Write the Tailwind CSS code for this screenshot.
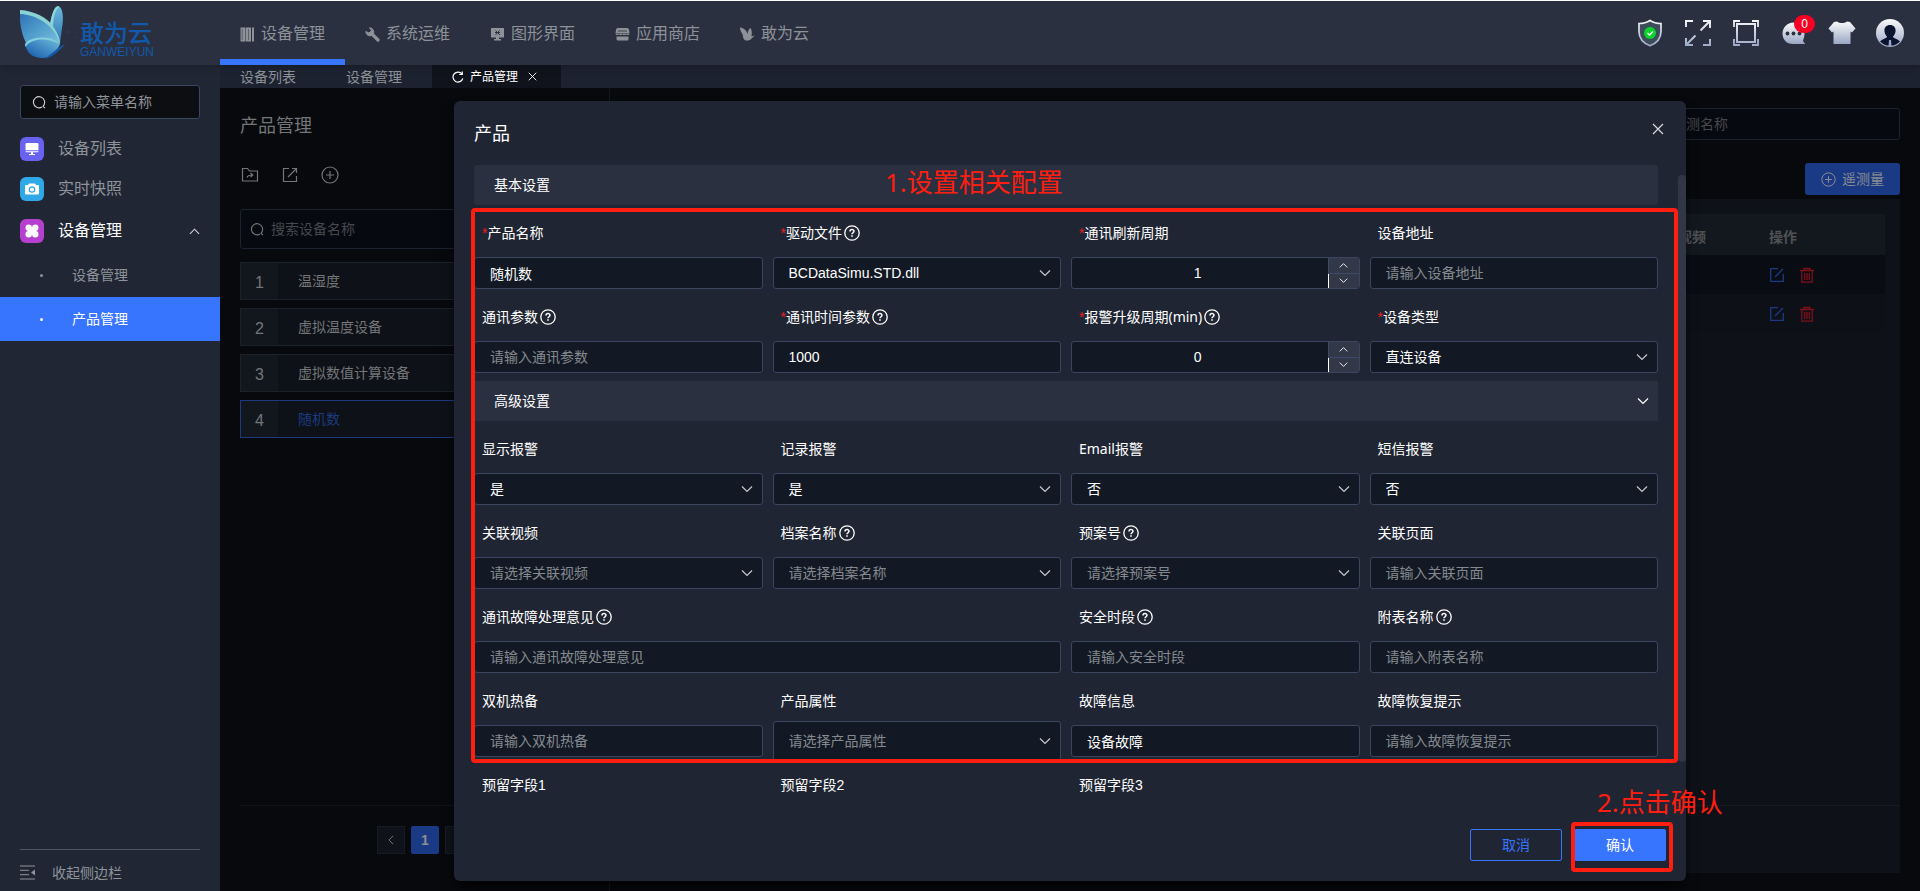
<!DOCTYPE html>
<html lang="zh-CN">
<head>
    <meta charset="UTF-8">
    <meta name="viewport" content="width=device-width, initial-scale=1.0">
    <title>产品管理 - 敢为云</title>
    <script src="https://cdn.jsdelivr.net/npm/@tailwindcss/browser@4"></script>
</head>
<body class="flex h-screen flex-col overflow-hidden border-t border-white bg-[#08090d] font-['Liberation_Sans','Noto_Sans_CJK_SC',sans-serif] text-sm text-white">

    <!-- Shared icons -->
    <svg class="absolute h-0 w-0" aria-hidden="true">
        <symbol id="down" viewBox="0 0 12 12"><path d="M1 3.5l5 5 5-5" fill="none" stroke="currentColor" stroke-width="1.2"/></symbol>
        <symbol id="up" viewBox="0 0 12 12"><path d="M1 8.5l5-5 5 5" fill="none" stroke="currentColor" stroke-width="1.2"/></symbol>
        <symbol id="close" viewBox="0 0 12 12"><path d="M1 1l10 10M11 1L1 11" fill="none" stroke="currentColor" stroke-width="1.2"/></symbol>
        <symbol id="search" viewBox="0 0 14 14"><path d="M11 11.2a5.6 5.6 0 1 0-1 .8M10.600 10.800L13 13.200" fill="none" stroke="currentColor" stroke-width="1.1"/></symbol>
        <symbol id="help" viewBox="0 0 16 16"><circle cx="8" cy="8" r="7.200" fill="none" stroke="currentColor" stroke-width="1.300"/><path d="M6 6.500c0-2.600 4-2.500 4-.200 0 1.400-2 1.500-2 3" fill="none" stroke="currentColor" stroke-width="1.500"/><path d="M7.200 10.300h1.600v1.500H7.200z" fill="currentColor"/></symbol>
        <symbol id="plus" viewBox="0 0 18 18"><circle cx="9" cy="9" r="8" fill="none" stroke="currentColor" stroke-width="1.200"/><path d="M9 5v8M5 9h8" fill="none" stroke="currentColor" stroke-width="1.200"/></symbol>
        <symbol id="edit" viewBox="0 0 16 16"><path d="M9 1.700H1.700v12.600h12.600V7M6 10l8-8" fill="none" stroke="currentColor" stroke-width="1.300"/></symbol>
        <symbol id="trash" viewBox="0 0 16 16"><path d="M1 3.500h14M5 3.500v-2h6v2M2.800 3.500v11.700h10.400V3.500" fill="none" stroke="currentColor" stroke-width="1.300"/><path d="M5.700 6v7M8 6v7M10.300 6v7" stroke="currentColor" stroke-width="1.300"/></symbol>
        <linearGradient id="silver" x1="0" y1="0" x2="0" y2="1"><stop offset="0" stop-color="#fafafa"/><stop offset="1" stop-color="#9aa6c6"/></linearGradient>
        <linearGradient id="silverFull" gradientUnits="userSpaceOnUse" x1="0" y1="0" x2="0" y2="28"><stop offset="0" stop-color="#fafafa"/><stop offset="1" stop-color="#9aa6c6"/></linearGradient>
    </svg>

    <!-- Top bar -->
    <header class="z-10 flex h-16 shrink-0 bg-[#2a3040] shadow-md">
        <a href="#" class="flex w-[220px] shrink-0 pl-5">
            <svg class="mt-[5px] h-[55px] w-[60px] shrink-0" viewBox="0 0 60 55">
                <defs>
                    <linearGradient id="wingA" x1="0" y1="0" x2="1" y2="1"><stop offset="0" stop-color="#2b6cb5"/><stop offset=".5" stop-color="#4f9ccb"/><stop offset="1" stop-color="#7cc0dd"/></linearGradient>
                    <linearGradient id="wingB" x1="0" y1="0" x2="0" y2="1"><stop offset="0" stop-color="#6cb9da"/><stop offset="1" stop-color="#2f78b8"/></linearGradient>
                    <linearGradient id="wingC" x1="0" y1="1" x2="1" y2="0"><stop offset="0" stop-color="#1355a8"/><stop offset="1" stop-color="#70c0e0"/></linearGradient>
                </defs>
                <path d="M30 18C32 8 34 1 38 0c5 1 6 12 4 22l-2 15z" fill="url(#wingB)"/>
                <path d="M30 18C32 8 34 1 38 0l1 1c-4 3-6 12-6 21z" fill="#8fd6d8"/>
                <path d="M0 4c13 1 28 7 34 18 4 6 6 11 6 16-8-6-22-5-34-1C1 27-1 14 0 4z" fill="url(#wingA)"/>
                <path d="M0 4c13 1 28 7 34 18 4 6 6 11 6 16C36 22 20 9 0 8z" fill="#8bd3d2"/>
                <path d="M5 37c8-7 28-7 35 1-3 8-11 14-18 14-9 0-16-5-17-15z" fill="url(#wingC)"/>
                <path d="M5 41c-2-10 25-14 35-3-12-6-27-7-35 3z" fill="#84d0dc"/>
                <path d="M25 53c5-1 14-7 20-15-4 2-14 9-20 15z" fill="#1459ad"/>
                <circle cx="49" cy="26" r=".7" fill="#1459ad"/><circle cx="47" cy="36" r=".5" fill="#1459ad"/><circle cx="57" cy="31" r=".6" fill="#1459ad"/>
            </svg>
            <span class="flex flex-col pt-5 text-[#1258ab]">
                <span class="text-2xl leading-[26px] font-medium">敢为云</span>
                <span class="text-xs leading-[10px]">GANWEIYUN</span>
            </span>
        </a>
        <nav class="flex text-base text-[#8d9198]">
            <a href="#" class="flex items-center gap-1.5 border-b-[6px] border-[#3875ff] px-5 pb-0.5 pt-2.5">
                <svg class="h-[15px] w-[15px]" viewBox="0 0 15 15" fill="currentColor"><path d="M.5 .5h5v14h-5zM6 .5h5v14H6zM12 .5h2v14h-2z"/><path d="M2.200 2v11M8.500 2v11" stroke="#2a3040" stroke-width=".5"/></svg>设备管理</a>
            <a href="#" class="flex items-center gap-1.5 px-5 pt-0.5">
                <svg class="h-[15px] w-[15px]" viewBox="0 0 15 15" fill="none" stroke="currentColor"><path d="M4.500 .8L6.500 3.500 4 6 .8 4.500A4.200 4.200 0 0 0 7 8.300L8.500 6.700A4.300 4.300 0 0 0 4.500 .8z" fill="currentColor"/><path d="M6.500 6.500l6.500 6.500" stroke-width="3.200" stroke-linecap="round"/></svg>系统运维</a>
            <a href="#" class="flex items-center gap-1.5 px-5 pt-0.5">
                <svg class="h-[15px] w-[15px]" viewBox="0 0 15 15" fill="currentColor"><path d="M1 1h13v9.500H1zM6 10h3v2.500H6zM4 12h7v1.500H4z"/><path d="M5.500 3.500l4.500 4.500M9.500 3.500l-4 4.500M5 5.500h5" stroke="#2a3040" stroke-width="1"/></svg>图形界面</a>
            <a href="#" class="flex items-center gap-1.5 px-5 pt-0.5">
                <svg class="h-[15px] w-[15px]" viewBox="0 0 15 15" fill="currentColor"><path d="M3 1h9a2 2 0 0 1 2 2l.500 3H.5L1 3a2 2 0 0 1 2-2z"/><path d="M.5 6.500h14c0 2-3 2-3.500.6-.5 1.600-3 1.600-3.500 0-.5 1.600-3 1.600-3.500 0C3.500 8.500.5 8.500.5 6.500zM1.500 9.500h12V12a1.500 1.500 0 0 1-1.500 1.500H3A1.500 1.500 0 0 1 1.500 12z"/><path d="M3 4h9" stroke="#2a3040" stroke-width=".8"/></svg>应用商店</a>
            <a href="#" class="flex items-center gap-1.5 px-5 pt-0.5">
                <svg class="h-[15px] w-[15px]" viewBox="0 0 15 15" fill="currentColor"><path d="M0 .5c4 .5 7 3.500 7.500 6.500C8 4 9 1.500 10.500 1c1.500 2 1.500 5 1 8.500l3.500-1-3.500 3c-2 3-8 3-8.500-1.500C3.500 8 1.500 6 .8 4 .2 3 0 2 0 .5z"/></svg>敢为云</a>
        </nav>
        <div class="ml-auto flex items-center gap-5 pr-4">
            <button aria-label="安全">
                <svg class="block h-7 w-7" viewBox="0 0 28 28"><path d="M14 1.500c3 2 7 3 11 3v8c0 7-4 11.500-11 14.300C7 24 3 19.500 3 12.500v-8c4 0 8-1 11-3z" fill="#3c4c58" stroke="url(#silverFull)" stroke-width="1.700"/><circle cx="14" cy="14" r="6" fill="#0bd52c"/><path d="M11.500 14l2 2 3.500-3.500" fill="none" stroke="#fff" stroke-width="1.300"/></svg>
            </button>
            <button aria-label="全屏">
                <svg class="block h-7 w-7" viewBox="0 0 28 28" fill="none" stroke="url(#silverFull)" stroke-width="2"><path d="M2 8V2h7M19 2h7v7M26 20v6h-7M9 26H2v-7M25.500 2.500l-9 9M2.500 25.500l9-9"/></svg>
            </button>
            <button aria-label="窗口">
                <svg class="block h-7 w-7" viewBox="0 0 28 28" fill="none" stroke="url(#silverFull)" stroke-width="1.800"><path d="M5 5h18v18H5z" stroke-width="2"/><path d="M2 8V2h6M20 2h6v6M26 20v6h-6M8 26H2v-6"/></svg>
            </button>
            <button aria-label="消息" class="relative">
                <svg class="block h-7 w-7" viewBox="0 0 28 28"><path d="M13.500 3.500c7 0 11.500 5 11 10.500 0 3-.5 5-1.500 7.500.5 1.500 1 2.500 2.500 3.500H13C6 25 2.500 20 2.500 14.500S7 3.500 13.500 3.500z" fill="url(#silver)"/><g fill="#2a3040"><circle cx="7.500" cy="14.500" r="1.900"/><circle cx="13.500" cy="14.500" r="1.900"/><circle cx="19.500" cy="14.500" r="1.900"/></g></svg>
                <span class="absolute -top-1 left-[14px] h-[18px] w-[21px] rounded-full bg-[#f80023] text-center text-xs leading-[18px]">0</span>
            </button>
            <button aria-label="主题">
                <svg class="block h-7 w-7" viewBox="0 0 28 28"><path d="M9 2.500c3 2 7 2 10 0l3 .5 5.500 6.500-3.500 4-1.500-1V25h-17V12.500l-1.500 1L.5 9.500 6 3z" fill="url(#silver)"/></svg>
            </button>
            <button aria-label="用户">
                <svg class="block h-7 w-7" viewBox="0 0 28 28"><circle cx="14" cy="14" r="14" fill="url(#silver)"/><path d="M14 6c4 0 6 3 5.500 6.500-.3 2.500-1.500 4-2.500 5 0 2 5 2.500 7 5A14 14 0 0 1 4 22.500c2-2.500 7-3 7-5-1-1-2.200-2.500-2.500-5C8 9 10 6 14 6z" fill="#0b1430"/><path d="M13 21h2l.5 6h-3z" fill="#9aa6c6"/></svg>
            </button>
        </div>
    </header>

    <div class="flex min-h-0 flex-1">
        <!-- Sidebar -->
        <aside class="flex w-[220px] shrink-0 flex-col bg-[#202634] pt-5 text-[#8f939a]">
            <label class="mx-5 mb-2.5 flex h-[34px] items-center gap-2 rounded-[3px] border border-[#3a4560] bg-[#0d0e12] pl-[11px]">
                <svg class="h-[14px] w-[14px] shrink-0 text-white/80"><use href="#search"/></svg>
                <input type="text" placeholder="请输入菜单名称" aria-label="请输入菜单名称" class="w-full min-w-0 bg-transparent outline-none placeholder:text-[#8f939a]">
            </label>
            <a href="#" class="flex h-10 items-center gap-[14px] px-5 text-base">
                <span class="grid h-6 w-6 place-items-center rounded-md bg-[#6961f0]">
                    <svg class="h-[14px] w-[14px]" viewBox="0 0 14 14" fill="#fff"><path d="M1.500 1h11a1 1 0 0 1 1 1v6.300H.5V2a1 1 0 0 1 1-1zM.5 9.300h13a1 1 0 0 1-1 1h-11a1 1 0 0 1-1-1zM6 10h2v2h2v1H4v-1h2z"/></svg>
                </span>设备列表</a>
            <a href="#" class="flex h-10 items-center gap-[14px] px-5 text-base">
                <span class="grid h-6 w-6 place-items-center rounded-md bg-[#2fa8e8]">
                    <svg class="h-[14px] w-[14px]" viewBox="0 0 14 14"><path d="M4 1.500h6l1 1.500h2a1 1 0 0 1 1 1v7.500a1 1 0 0 1-1 1H1a1 1 0 0 1-1-1V4a1 1 0 0 1 1-1h2z" fill="#fff"/><circle cx="7" cy="7.500" r="2.700" fill="none" stroke="#2fa8e8" stroke-width="1.200"/></svg>
                </span>实时快照</a>
            <a href="#" class="flex h-11 items-center gap-[14px] px-5 text-base text-white">
                <span class="grid h-6 w-6 place-items-center rounded-md bg-[#b63fcf]">
                    <svg class="h-[14px] w-[14px]" viewBox="0 0 14 14" fill="#fff"><circle cx="3.700" cy="3.700" r="3.200"/><circle cx="10.300" cy="3.700" r="3.200"/><circle cx="3.700" cy="10.300" r="3.200"/><circle cx="10.300" cy="10.300" r="3.200"/><path d="M4 4h6v6H4z"/></svg>
                </span>设备管理
                <svg class="ml-auto h-[11px] w-[11px] text-white/80"><use href="#up"/></svg></a>
            <a href="#" class="flex h-11 items-center pl-10"><span class="mr-[29px] h-[3px] w-[3px] rounded-full bg-[#8f939a]"></span>设备管理</a>
            <a href="#" class="flex h-11 items-center bg-[#3875ff] pl-10 text-white"><span class="mr-[29px] h-[3px] w-[3px] rounded-full bg-white"></span>产品管理</a>
            <button class="mx-5 mt-auto flex h-[42px] items-center gap-[17px] border-t border-[#4f5664] pt-1">
                <svg class="h-[15px] w-[15px]" viewBox="0 0 15 15"><path d="M0 1h15M0 5.300h9M0 9.700h9M0 14h15" stroke="currentColor"/><path d="M15 4.500v6l-4-3z" fill="currentColor"/></svg>
                收起侧边栏</button>
        </aside>

        <main class="flex min-w-0 flex-1 flex-col">
            <!-- Page tabs -->
            <div class="flex h-[23px] shrink-0 items-stretch bg-[#1c222f] text-[#8d9198]">
                <a href="#" class="flex w-[106px] items-center pl-5">设备列表</a>
                <a href="#" class="flex w-[106px] items-center pl-5">设备管理</a>
                <div class="flex w-[129px] items-center bg-[#10131c] pl-5 text-xs text-white">
                    <svg class="mr-1.5 h-3 w-3" viewBox="0 0 12 12" fill="none" stroke="currentColor" stroke-width="1.200"><path d="M10.800 7.500A5 5 0 1 1 10 3M10.300 .5v3h-3"/></svg>
                    产品管理
                    <button aria-label="关闭标签" class="ml-2.5"><svg class="h-[9px] w-[9px]"><use href="#close"/></svg></button>
                </div>
            </div>

            <div class="relative flex min-h-0 flex-1">
                <!-- Product list -->
                <section class="flex w-[390px] shrink-0 flex-col border-r border-[#14171e] pl-5 pr-5 text-[#747678]">
                    <h1 class="mt-6 text-lg leading-7">产品管理</h1>
                    <div class="mt-[26px] flex h-[18px] items-center gap-[22px] pl-px">
                        <button aria-label="导入"><svg class="block h-[18px] w-[18px]" viewBox="0 0 18 18" fill="none" stroke="currentColor" stroke-width="1.200"><path d="M1.500 15V2.500h5l2 2.500h8v10zM6 11.500c.5-2 2-2.500 5.500-2.500M9.500 7l2.300 2-2.300 2"/></svg></button>
                        <button aria-label="导出"><svg class="block h-[18px] w-[18px]" viewBox="0 0 18 18" fill="none" stroke="currentColor" stroke-width="1.200"><path d="M8 2.500H2.500v13h13V10M7 11l8.500-8.500M11 2.500h4.500V7"/></svg></button>
                        <button aria-label="新增"><svg class="block h-[18px] w-[18px]"><use href="#plus"/></svg></button>
                    </div>
                    <label class="mt-[25px] flex h-10 shrink-0 items-center gap-[7px] rounded-[3px] border border-[#1c2230] bg-[#060910] pl-[9px]">
                        <svg class="h-[14px] w-[14px] shrink-0"><use href="#search"/></svg>
                        <input type="text" placeholder="搜索设备名称" aria-label="搜索设备名称" class="w-full min-w-0 bg-transparent outline-none placeholder:text-[#46484c]">
                    </label>
                    <ul class="mt-[13px] flex flex-col gap-2">
                        <li class="flex h-[38px] items-center border border-[#1c222c] bg-[#0e1117]"><span class="grid h-full w-[37px] place-items-center bg-[#12171d] pt-1 text-base">1</span><span class="pl-5">温湿度</span></li>
                        <li class="flex h-[38px] items-center border border-[#1c222c] bg-[#0e1117]"><span class="grid h-full w-[37px] place-items-center bg-[#12171d] pt-1 text-base">2</span><span class="pl-5">虚拟温度设备</span></li>
                        <li class="flex h-[38px] items-center border border-[#1c222c] bg-[#0e1117]"><span class="grid h-full w-[37px] place-items-center bg-[#12171d] pt-1 text-base">3</span><span class="pl-5">虚拟数值计算设备</span></li>
                        <li class="flex h-[38px] items-center border border-[#1b3a80] bg-[#0e1117]"><span class="grid h-full w-[37px] place-items-center bg-[#12171d] pt-1 text-base">4</span><span class="pl-5 text-[#1b3a80]">随机数</span></li>
                    </ul>
                    <div class="mt-auto flex h-[86px] gap-1.5 border-t border-[#111318] pl-[137px] pt-5">
                        <button aria-label="上一页" class="grid h-7 w-7 place-items-center border border-[#171b23] bg-[#0f1218]"><svg class="h-[10px] w-[10px] -rotate-90"><use href="#up"/></svg></button>
                        <button class="h-7 w-7 rounded-xs bg-[#1b3a85] font-bold text-[#8d8f93]">1</button>
                        <button aria-label="下一页" class="grid h-7 w-7 place-items-center border border-[#171b23] bg-[#0f1218]"><svg class="h-[10px] w-[10px] rotate-90"><use href="#up"/></svg></button>
                    </div>
                </section>

                <!-- Telemetry table -->
                <section class="flex min-w-0 flex-1 flex-col p-5 pb-[18px]">
                    <div class="flex justify-end">
                        <input type="text" placeholder="请输入遥测名称" aria-label="请输入遥测名称" class="h-8 w-[285px] rounded-[3px] border border-[#1c2230] bg-[#060910] px-[14px] outline-none placeholder:text-[#46484c]">
                    </div>
                    <button class="mt-[23px] flex h-8 w-[95px] shrink-0 items-center justify-center gap-1.5 self-end rounded-[3px] bg-[#1b3a85] text-[#8a8c90]"><svg class="h-[15px] w-[15px]"><use href="#plus"/></svg>遥测量</button>
                    <div class="mt-1 flex min-h-0 flex-1 flex-col bg-[#0e1117] pt-[15px]">
                        <div class="px-[15px]">
                            <table class="w-full table-fixed text-left">
                                <thead>
                                    <tr class="h-[41px] bg-[#13181e] text-[#4f5154]">
                                        <th></th>
                                        <th class="w-[129px] pl-2.5 pt-1">关联视频</th>
                                        <th class="w-[116px] pt-1">操作</th>
                                    </tr>
                                </thead>
                                <tbody>
                                    <tr class="h-[39px] bg-[#090c13]">
                                        <td></td><td></td>
                                        <td><div class="flex gap-[14px]"><button aria-label="编辑"><svg class="block h-4 w-4 text-[#1b3a85]"><use href="#edit"/></svg></button><button aria-label="删除"><svg class="block h-4 w-4 text-[#7e1018]"><use href="#trash"/></svg></button></div></td>
                                    </tr>
                                    <tr class="h-[39px] bg-[#0d1016]">
                                        <td></td><td></td>
                                        <td><div class="flex gap-[14px]"><button aria-label="编辑"><svg class="block h-4 w-4 text-[#1b3a85]"><use href="#edit"/></svg></button><button aria-label="删除"><svg class="block h-4 w-4 text-[#7e1018]"><use href="#trash"/></svg></button></div></td>
                                    </tr>
                                </tbody>
                            </table>
                        </div>
                        <div class="mt-auto h-[68px] border-t border-[#171a20]"></div>
                    </div>
                </section>

                <!-- Product dialog -->
                <div role="dialog" aria-labelledby="dialogTitle" class="absolute inset-x-[234px] bottom-2.5 top-[13px] flex flex-col rounded-md bg-[#202533] shadow-lg shadow-black/60">
                    <div class="flex h-16 shrink-0 items-center justify-between pl-5 pr-[22px]">
                        <h2 id="dialogTitle" class="pt-0.5 text-lg">产品</h2>
                        <button aria-label="关闭" class="-mt-2"><svg class="block h-3 w-3 text-[#d6d8dc]"><use href="#close"/></svg></button>
                    </div>
                    <div class="relative min-h-0 flex-1">
                        <form class="h-full overflow-hidden pl-5 pr-7">
                            <h3 class="flex h-10 items-center rounded-[3px] bg-[#2a303f] pl-5">基本设置</h3>
                            <div class="grid grid-cols-4 gap-x-2.5">
                                <div class="pt-2">
                                    <label for="name" class="mb-1 flex h-10 items-center pl-2"><span class="text-[#f01c24]">*</span>产品名称</label>
                                    <input id="name" type="text" value="随机数" class="h-8 w-full rounded-[3px] border border-[#3a4560] bg-[#121924] px-[15px]">
                                </div>
                                <div class="pt-2">
                                    <label for="driver" class="mb-1 flex h-10 items-center pl-2"><span class="text-[#f01c24]">*</span>驱动文件<svg class="ml-0.5 h-4 w-4"><use href="#help"/></svg></label>
                                    <div class="relative">
                                        <select id="driver" class="block h-8 w-full appearance-none rounded-[3px] border border-[#3a4560] bg-[#121924] px-[15px]"><option>BCDataSimu.STD.dll</option></select>
                                        <svg class="pointer-events-none absolute right-2.5 top-2.5 h-3 w-3 text-[#c6c8cc]"><use href="#down"/></svg>
                                    </div>
                                </div>
                                <div class="pt-2">
                                    <label for="refresh" class="mb-1 flex h-10 items-center pl-2"><span class="text-[#f01c24]">*</span>通讯刷新周期</label>
                                    <div class="flex h-8 overflow-hidden rounded-[3px] border border-[#3a4560] bg-[#121924]">
                                        <input id="refresh" type="text" value="1" class="min-w-0 flex-1 pr-1 text-center">
                                        <div class="flex w-[31px] flex-col bg-[#323848] text-white">
                                            <button type="button" aria-label="增加" class="grid flex-1 place-items-center border-b border-l border-[#3a4a6b]"><svg class="h-[9px] w-[9px]"><use href="#up"/></svg></button>
                                            <button type="button" aria-label="减少" class="grid flex-1 place-items-center border-l border-white"><svg class="h-[9px] w-[9px]"><use href="#down"/></svg></button>
                                        </div>
                                    </div>
                                </div>
                                <div class="pt-2">
                                    <label for="address" class="mb-1 flex h-10 items-center pl-2">设备地址</label>
                                    <input id="address" type="text" placeholder="请输入设备地址" class="h-8 w-full rounded-[3px] border border-[#3a4560] bg-[#121924] px-[15px] placeholder:text-[#85898f]">
                                </div>
                                <div class="pt-2">
                                    <label for="params" class="mb-1 flex h-10 items-center pl-2">通讯参数<svg class="ml-0.5 h-4 w-4"><use href="#help"/></svg></label>
                                    <input id="params" type="text" placeholder="请输入通讯参数" class="h-8 w-full rounded-[3px] border border-[#3a4560] bg-[#121924] px-[15px] placeholder:text-[#85898f]">
                                </div>
                                <div class="pt-2">
                                    <label for="timeParams" class="mb-1 flex h-10 items-center pl-2"><span class="text-[#f01c24]">*</span>通讯时间参数<svg class="ml-0.5 h-4 w-4"><use href="#help"/></svg></label>
                                    <input id="timeParams" type="text" value="1000" class="h-8 w-full rounded-[3px] border border-[#3a4560] bg-[#121924] px-[15px]">
                                </div>
                                <div class="pt-2">
                                    <label for="upgrade" class="mb-1 flex h-10 items-center pl-2"><span class="text-[#f01c24]">*</span><span class="font-['Noto_Sans','Noto_Sans_CJK_SC',sans-serif]">报警升级周期(min)</span><svg class="ml-0.5 h-4 w-4"><use href="#help"/></svg></label>
                                    <div class="flex h-8 overflow-hidden rounded-[3px] border border-[#3a4560] bg-[#121924]">
                                        <input id="upgrade" type="text" value="0" class="min-w-0 flex-1 pr-1 text-center">
                                        <div class="flex w-[31px] flex-col bg-[#323848] text-white">
                                            <button type="button" aria-label="增加" class="grid flex-1 place-items-center border-b border-l border-[#3a4a6b]"><svg class="h-[9px] w-[9px]"><use href="#up"/></svg></button>
                                            <button type="button" aria-label="减少" class="grid flex-1 place-items-center border-l border-white"><svg class="h-[9px] w-[9px]"><use href="#down"/></svg></button>
                                        </div>
                                    </div>
                                </div>
                                <div class="pt-2">
                                    <label for="type" class="mb-1 flex h-10 items-center pl-2"><span class="text-[#f01c24]">*</span>设备类型</label>
                                    <div class="relative">
                                        <select id="type" class="block h-8 w-full appearance-none rounded-[3px] border border-[#3a4560] bg-[#121924] px-[15px]"><option>直连设备</option></select>
                                        <svg class="pointer-events-none absolute right-2.5 top-2.5 h-3 w-3 text-[#c6c8cc]"><use href="#down"/></svg>
                                    </div>
                                </div>
                            </div>

                            <h3 class="mt-2 flex h-10 items-center justify-between bg-[#2a303f] pl-5 pr-[9px]">高级设置<svg class="h-3 w-3"><use href="#down"/></svg></h3>
                            <div class="grid grid-cols-4 gap-x-2.5">
                                <div class="pt-2">
                                    <label for="showAlarm" class="mb-1 flex h-10 items-center pl-2">显示报警</label>
                                    <div class="relative">
                                        <select id="showAlarm" class="block h-8 w-full appearance-none rounded-[3px] border border-[#3a4560] bg-[#121924] px-[15px]"><option>是</option><option>否</option></select>
                                        <svg class="pointer-events-none absolute right-2.5 top-2.5 h-3 w-3 text-[#c6c8cc]"><use href="#down"/></svg>
                                    </div>
                                </div>
                                <div class="pt-2">
                                    <label for="recordAlarm" class="mb-1 flex h-10 items-center pl-2">记录报警</label>
                                    <div class="relative">
                                        <select id="recordAlarm" class="block h-8 w-full appearance-none rounded-[3px] border border-[#3a4560] bg-[#121924] px-[15px]"><option>是</option><option>否</option></select>
                                        <svg class="pointer-events-none absolute right-2.5 top-2.5 h-3 w-3 text-[#c6c8cc]"><use href="#down"/></svg>
                                    </div>
                                </div>
                                <div class="pt-2">
                                    <label for="emailAlarm" class="mb-1 flex h-10 items-center pl-2 font-['Noto_Sans','Noto_Sans_CJK_SC',sans-serif]">Email报警</label>
                                    <div class="relative">
                                        <select id="emailAlarm" class="block h-8 w-full appearance-none rounded-[3px] border border-[#3a4560] bg-[#121924] px-[15px]"><option>否</option><option>是</option></select>
                                        <svg class="pointer-events-none absolute right-2.5 top-2.5 h-3 w-3 text-[#c6c8cc]"><use href="#down"/></svg>
                                    </div>
                                </div>
                                <div class="pt-2">
                                    <label for="smsAlarm" class="mb-1 flex h-10 items-center pl-2">短信报警</label>
                                    <div class="relative">
                                        <select id="smsAlarm" class="block h-8 w-full appearance-none rounded-[3px] border border-[#3a4560] bg-[#121924] px-[15px]"><option>否</option><option>是</option></select>
                                        <svg class="pointer-events-none absolute right-2.5 top-2.5 h-3 w-3 text-[#c6c8cc]"><use href="#down"/></svg>
                                    </div>
                                </div>
                                <div class="pt-2">
                                    <label for="video" class="mb-1 flex h-10 items-center pl-2">关联视频</label>
                                    <div class="relative">
                                        <select id="video" class="block h-8 w-full appearance-none rounded-[3px] border border-[#3a4560] bg-[#121924] px-[15px] text-[#85898f]"><option>请选择关联视频</option></select>
                                        <svg class="pointer-events-none absolute right-2.5 top-2.5 h-3 w-3 text-[#c6c8cc]"><use href="#down"/></svg>
                                    </div>
                                </div>
                                <div class="pt-2">
                                    <label for="archive" class="mb-1 flex h-10 items-center pl-2">档案名称<svg class="ml-0.5 h-4 w-4"><use href="#help"/></svg></label>
                                    <div class="relative">
                                        <select id="archive" class="block h-8 w-full appearance-none rounded-[3px] border border-[#3a4560] bg-[#121924] px-[15px] text-[#85898f]"><option>请选择档案名称</option></select>
                                        <svg class="pointer-events-none absolute right-2.5 top-2.5 h-3 w-3 text-[#c6c8cc]"><use href="#down"/></svg>
                                    </div>
                                </div>
                                <div class="pt-2">
                                    <label for="plan" class="mb-1 flex h-10 items-center pl-2">预案号<svg class="ml-0.5 h-4 w-4"><use href="#help"/></svg></label>
                                    <div class="relative">
                                        <select id="plan" class="block h-8 w-full appearance-none rounded-[3px] border border-[#3a4560] bg-[#121924] px-[15px] text-[#85898f]"><option>请选择预案号</option></select>
                                        <svg class="pointer-events-none absolute right-2.5 top-2.5 h-3 w-3 text-[#c6c8cc]"><use href="#down"/></svg>
                                    </div>
                                </div>
                                <div class="pt-2">
                                    <label for="page" class="mb-1 flex h-10 items-center pl-2">关联页面</label>
                                    <input id="page" type="text" placeholder="请输入关联页面" class="h-8 w-full rounded-[3px] border border-[#3a4560] bg-[#121924] px-[15px] placeholder:text-[#85898f]">
                                </div>
                                <div class="col-span-2 pt-2">
                                    <label for="advice" class="mb-1 flex h-10 items-center pl-2">通讯故障处理意见<svg class="ml-0.5 h-4 w-4"><use href="#help"/></svg></label>
                                    <input id="advice" type="text" placeholder="请输入通讯故障处理意见" class="h-8 w-full rounded-[3px] border border-[#3a4560] bg-[#121924] px-[15px] placeholder:text-[#85898f]">
                                </div>
                                <div class="pt-2">
                                    <label for="safeTime" class="mb-1 flex h-10 items-center pl-2">安全时段<svg class="ml-0.5 h-4 w-4"><use href="#help"/></svg></label>
                                    <input id="safeTime" type="text" placeholder="请输入安全时段" class="h-8 w-full rounded-[3px] border border-[#3a4560] bg-[#121924] px-[15px] placeholder:text-[#85898f]">
                                </div>
                                <div class="pt-2">
                                    <label for="subTable" class="mb-1 flex h-10 items-center pl-2">附表名称<svg class="ml-0.5 h-4 w-4"><use href="#help"/></svg></label>
                                    <input id="subTable" type="text" placeholder="请输入附表名称" class="h-8 w-full rounded-[3px] border border-[#3a4560] bg-[#121924] px-[15px] placeholder:text-[#85898f]">
                                </div>
                                <div class="pt-2">
                                    <label for="backup" class="mb-1 flex h-10 items-center pl-2">双机热备</label>
                                    <input id="backup" type="text" placeholder="请输入双机热备" class="h-8 w-full rounded-[3px] border border-[#3a4560] bg-[#121924] px-[15px] placeholder:text-[#85898f]">
                                </div>
                                <div class="pt-2">
                                    <label for="attribute" class="flex h-10 items-center pl-2">产品属性</label>
                                    <div class="relative -mb-1">
                                        <select id="attribute" class="block h-10 w-full appearance-none rounded-[3px] border border-[#3a4560] bg-[#121924] px-[15px] text-[#85898f]"><option>请选择产品属性</option></select>
                                        <svg class="pointer-events-none absolute right-2.5 top-[14px] h-3 w-3 text-[#c6c8cc]"><use href="#down"/></svg>
                                    </div>
                                </div>
                                <div class="pt-2">
                                    <label for="fault" class="mb-1 flex h-10 items-center pl-2">故障信息</label>
                                    <input id="fault" type="text" value="设备故障" class="h-8 w-full rounded-[3px] border border-[#3a4560] bg-[#121924] px-[15px]">
                                </div>
                                <div class="pt-2">
                                    <label for="recover" class="mb-1 flex h-10 items-center pl-2">故障恢复提示</label>
                                    <input id="recover" type="text" placeholder="请输入故障恢复提示" class="h-8 w-full rounded-[3px] border border-[#3a4560] bg-[#121924] px-[15px] placeholder:text-[#85898f]">
                                </div>
                                <div class="pt-2">
                                    <label for="reserve1" class="mb-1 flex h-10 items-center pl-2">预留字段1</label>
                                    <input id="reserve1" type="text" class="h-8 w-full rounded-[3px] border border-[#3a4560] bg-[#121924] px-[15px]">
                                </div>
                                <div class="pt-2">
                                    <label for="reserve2" class="mb-1 flex h-10 items-center pl-2">预留字段2</label>
                                    <input id="reserve2" type="text" class="h-8 w-full rounded-[3px] border border-[#3a4560] bg-[#121924] px-[15px]">
                                </div>
                                <div class="pt-2">
                                    <label for="reserve3" class="mb-1 flex h-10 items-center pl-2">预留字段3</label>
                                    <input id="reserve3" type="text" class="h-8 w-full rounded-[3px] border border-[#3a4560] bg-[#121924] px-[15px]">
                                </div>
                            </div>
                        </form>
                        <!-- Scroll thumb -->
                        <div class="absolute bottom-[38px] right-0 top-2.5 w-2 rounded-full bg-[#323747]"></div>
                        <!-- Step 1 callout -->
                        <div class="pointer-events-none absolute bottom-[37px] left-[17px] right-2 top-[43px] rounded-sm border-4 border-[#ff1e10]"></div>
                        <p class="pointer-events-none absolute left-[431px] top-0 whitespace-nowrap font-['Noto_Sans','Noto_Sans_CJK_SC',sans-serif] text-[26px] leading-[34px] text-[#ff1e10]">1.设置相关配置</p>
                    </div>
                    <div class="flex shrink-0 justify-end gap-3 pb-5 pr-5 pt-[29px]">
                        <button class="h-8 w-[92px] rounded-xs border border-[#3875ff] text-[#3875ff]">取消</button>
                        <div class="relative">
                            <button class="block h-8 w-[92px] rounded-xs bg-[#3875ff]">确认</button>
                            <!-- Step 2 callout -->
                            <div class="pointer-events-none absolute -bottom-[11px] -left-[3px] -right-[7px] -top-[7px] rounded-sm border-4 border-[#ff1e10]"></div>
                            <p class="pointer-events-none absolute -top-11 left-[23px] whitespace-nowrap font-['Noto_Sans','Noto_Sans_CJK_SC',sans-serif] text-[26px] leading-[34px] text-[#ff1e10]">2.点击确认</p>
                        </div>
                    </div>
                </div>
            </div>
        </main>
    </div>
</body>
</html>
